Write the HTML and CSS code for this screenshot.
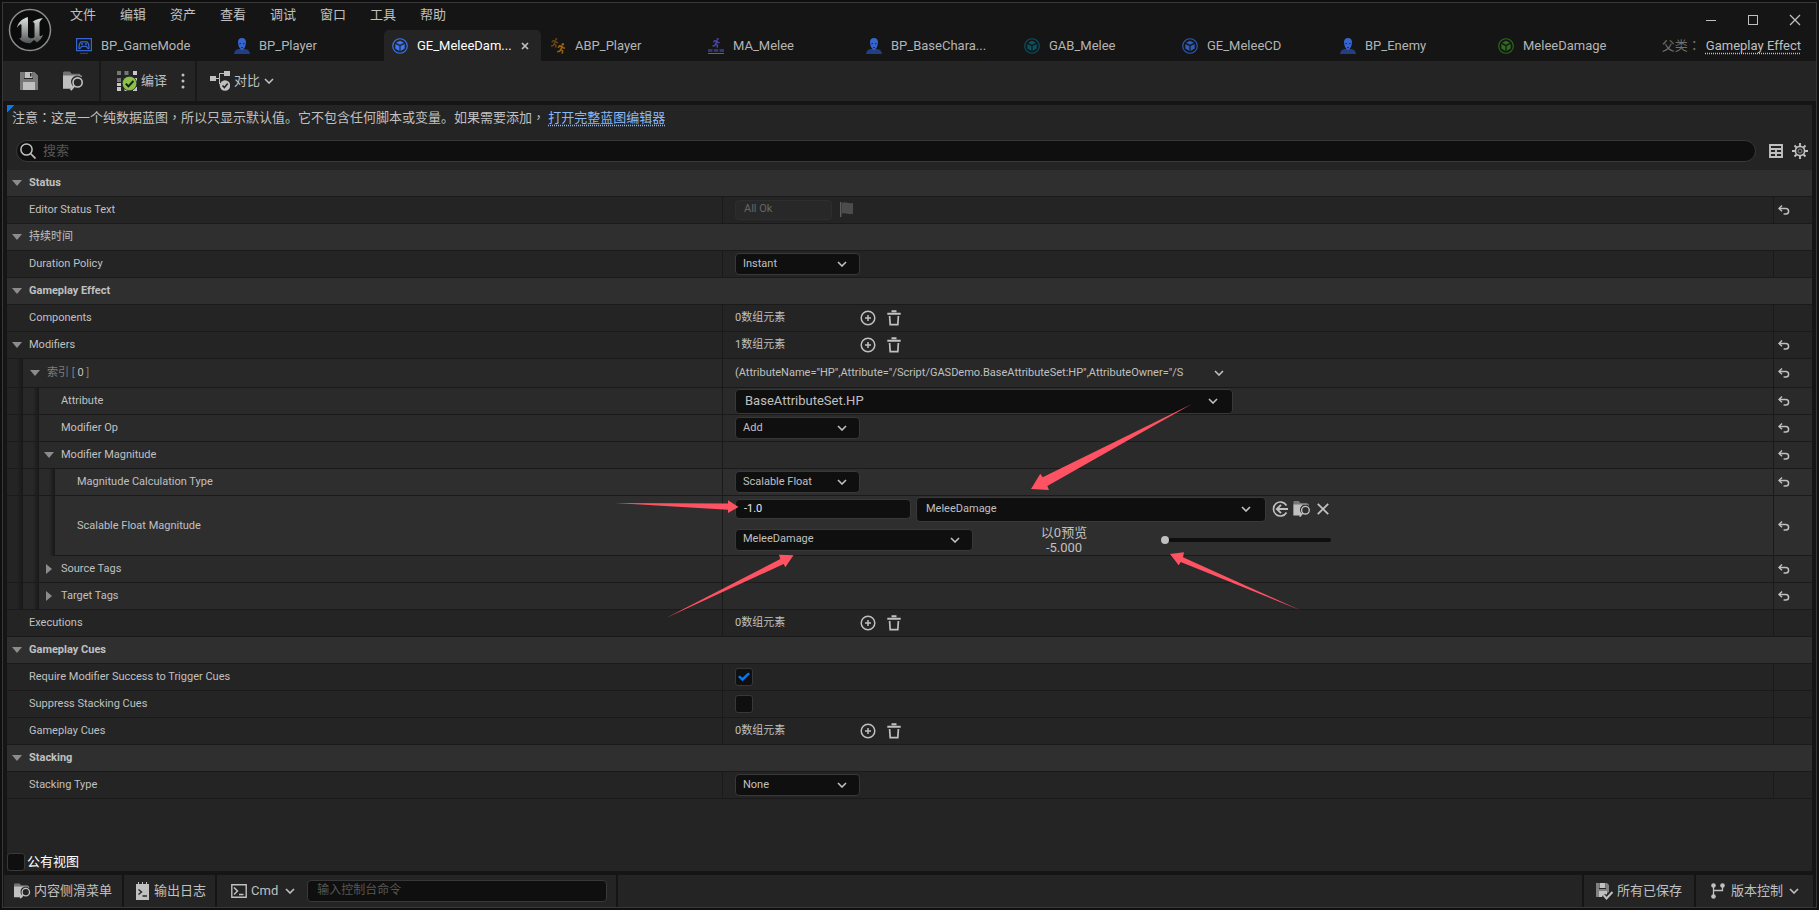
FILE: index.html
```
<!DOCTYPE html>
<html lang="zh-CN">
<head>
<meta charset="utf-8">
<title>GE_MeleeDamage</title>
<link rel="stylesheet" href="styles.css">
</head>
<body>
<svg class="sprite" aria-hidden="true">
  <symbol id="chev" viewBox="0 0 10 6"><path d="M1 1l4 4 4-4" fill="none" stroke="currentColor" stroke-width="1.6"/></symbol>
  <symbol id="plus" viewBox="0 0 16 16"><circle cx="8" cy="8" r="6.8" fill="none" stroke="currentColor" stroke-width="1.5"/><path d="M8 5v6M5 8h6" stroke="currentColor" stroke-width="1.5"/></symbol>
  <symbol id="trash" viewBox="0 0 14 16"><path d="M4.500 1.200h5M.3 3.700h13.400" stroke="currentColor" stroke-width="1.900"/><path d="M2.600 6l.6 8.600h7.600l.6-8.600" fill="none" stroke="currentColor" stroke-width="1.700"/></symbol>
  <symbol id="undo" viewBox="0 0 12 10"><path d="M1.500 3.400h6.300a2.800 2.800 0 0 1 0 5.600H5.600" fill="none" stroke="currentColor" stroke-width="1.500"/><path d="M4 .6L1 3.400l3 2.800" fill="none" stroke="currentColor" stroke-width="1.400"/></symbol>
  <symbol id="person" viewBox="0 0 16 16"><path d="M0 16c.3-3.200 2-4.600 5-5h6c3 .4 4.700 1.800 5 5z" fill="#223f86"/><path d="M8 0c2.700 0 4.200 1.800 4 4.600-.1 3-1.400 6.400-4 7.400-2.600-1-3.900-4.400-4-7.400C3.800 1.800 5.300 0 8 0z" fill="#3765d0"/><path d="M5.300 5.600h1.800M8.900 5.600h1.800M7 9.600h2" stroke="#1b2c60" stroke-width="1"/></symbol>
  <symbol id="cube" viewBox="0 0 16 16"><circle cx="8" cy="8" r="7.300" fill="none" stroke="currentColor" stroke-width="1.100"/><path d="M8 2.700l4 2-4 2.100-4-2.100zM3.300 5.900l4.100 2.200v5L3.300 10.500zM12.700 5.900L8.600 8.100v5l4.100-2.600z" fill="currentColor"/></symbol>
  <symbol id="runner" viewBox="0 0 10 12"><circle cx="7" cy="1.300" r="1.300"/><path d="M6.400 3.600L4.600 7l2.200 1.700-.5 2.800M4.700 7L3.500 9 .8 9.600M1.800 5.200l1.600-2L6.200 3.500l1.200 2h2" fill="none" stroke="currentColor" stroke-width="1.700"/></symbol>
  <symbol id="folder" viewBox="0 0 22 20"><path d="M0 3V1.200L1 0h6l2.200 2.500H18V5H0z" fill="currentColor" opacity=".5"/><path d="M0 4.300h19.500V6a6.500 6.500 0 0 0-9 9.500L9 18H0z" fill="currentColor"/><circle cx="15.300" cy="11.500" r="4.800" fill="none" stroke="currentColor" stroke-width="1.700"/><path d="M12 15l-4 4.500" stroke="currentColor" stroke-width="2"/></symbol>
  <symbol id="disk" viewBox="0 0 18 18"><path d="M0 0h4v7h9V0h1.500L18 3.500V18H0z" fill="currentColor" opacity=".55"/><path d="M4.500 0h8v6h-8zM3 10h12v8H3z" fill="currentColor"/><path d="M10 1h1.500v3.500H10z" fill="#242424"/></symbol>
</svg>

<div class="window">
  <header class="header">
    <svg class="logo" viewBox="0 0 44 44" role="img" aria-label="Unreal">
      <defs><linearGradient id="metal" x1="0" y1="0" x2="0" y2="1"><stop offset="0" stop-color="#e0e2e2"/><stop offset=".5" stop-color="#9b9f9f"/><stop offset="1" stop-color="#4d5252"/></linearGradient></defs>
      <circle cx="22" cy="22" r="20.500" fill="#0b0b0b" stroke="#8a8d8d" stroke-width="1.500"/>
      <path d="M20 9c-6 1.500-10.500 6-11 11 2.500-4 4-4.500 4.500-3v11c0 2-1 2.500-2.500 2.200C14 34 18 35.500 22.500 35.200L26 32l3 2.500c2.600-1.500 5-4.500 6.200-8-2 2-3.600 2.300-3.700.5V14.500c1-2 2.300-3.500 3.700-4.500-3.700.3-7.700 1.500-10.700 4 1.500.2 2 1 2 2v13c-1.500 1.800-5.500 2-6.500-.5V12.500c.1-1.500-.5-2.500 0-3.500z" fill="url(#metal)"/>
    </svg>
    <div class="headmain">
      <div class="menurow">
        <nav class="menu"><button>文件</button><button>编辑</button><button>资产</button><button>查看</button><button>调试</button><button>窗口</button><button>工具</button><button>帮助</button></nav>
        <div class="winctl">
          <button aria-label="最小化"><svg width="12" height="12" viewBox="0 0 12 12"><path d="M1 6.500h10" stroke="currentColor"/></svg></button>
          <button aria-label="最大化"><svg width="12" height="12" viewBox="0 0 12 12"><rect x="1.500" y="1.500" width="9" height="9" fill="none" stroke="currentColor"/></svg></button>
          <button aria-label="关闭"><svg width="12" height="12" viewBox="0 0 12 12"><path d="M1 1l10 10M11 1L1 11" stroke="currentColor" stroke-width="1.300"/></svg></button>
        </div>
      </div>
      <div class="tabrow">
        <nav class="tabs">
          <button class="tab"><svg class="i16" viewBox="0 0 16 16"><path d="M.6.600h14.800v12H.6z" fill="none" stroke="#3765d0" stroke-width="1.200"/><path d="M3 10.500c0-3.500.6-6 2-6.700h6c1.400.7 2 3.200 2 6.700-1 .6-2-1-2.600-2.200H5.600C5 9.500 4 11.100 3 10.500z" fill="none" stroke="#3765d0" stroke-width="1.300"/><circle cx="6" cy="6" r="1" fill="#3765d0"/><circle cx="10" cy="6" r="1" fill="#3765d0"/><path d="M4 15.400h8" stroke="#223f86" stroke-width="1.200"/></svg>BP_GameMode</button>
          <button class="tab"><svg class="i16"><use href="#person"/></svg>BP_Player</button>
          <button class="tab active"><svg class="i16 blue"><use href="#cube"/></svg>GE_MeleeDam...<svg class="tabx" viewBox="0 0 8 8"><path d="M1 1l6 6M7 1L1 7" stroke="#c0c0c0" stroke-width="1.700"/></svg></button>
          <button class="tab"><svg class="i16" viewBox="0 0 16 16"><use href="#runner" width="9" height="10" color="#6b440f" fill="#6b440f"/><use href="#runner" x="6" y="5" width="10" height="11" color="#9a5f10" fill="#9a5f10"/></svg>ABP_Player</button>
          <button class="tab"><svg class="i16" viewBox="0 0 16 16"><use href="#runner" x="3" width="10" height="10" color="#4a49a8" fill="#4a49a8"/><path d="M0 11h4.500v3H0zM5.700 11h4.500v3H5.700zM11.500 11H16v3h-4.500z" fill="#33327a"/><path d="M0 15.500h16" stroke="#5a59c4"/></svg>MA_Melee</button>
          <button class="tab"><svg class="i16"><use href="#person"/></svg>BP_BaseChara...</button>
          <button class="tab"><svg class="i16 teal"><use href="#cube"/></svg>GAB_Melee</button>
          <button class="tab"><svg class="i16 blue2"><use href="#cube"/></svg>GE_MeleeCD</button>
          <button class="tab"><svg class="i16"><use href="#person"/></svg>BP_Enemy</button>
          <button class="tab"><svg class="i16 green"><use href="#cube"/></svg>MeleeDamage</button>
        </nav>
        <div class="parent"><span>父类<span class="tc" lang="zh-TW">：</span></span><a href="#">Gameplay Effect</a></div>
      </div>
    </div>
  </header>

  <div class="toolbar">
    <div class="tgroup files">
      <button aria-label="保存"><svg width="18" height="18"><use href="#disk"/></svg></button>
      <button aria-label="浏览"><svg width="21" height="20"><use href="#folder"/></svg></button>
    </div>
    <div class="tgroup compile">
      <button><svg width="20" height="20" viewBox="0 0 20 20"><path d="M0 0h4v4H0zM7.500 0h4v4h-4zM0 7h4v4H0z" fill="#777"/><path d="M16 0h4v4h-4zM7.500 7h4v4h-4zM16 7h4v4h-4zM0 12h4v3H0zM0 16h4v4H0zM7.500 16h4v4h-4zM16 16h4v4h-4z" fill="#c8c8c8"/><circle cx="12.500" cy="12.500" r="7.300" fill="#8bc24a" stroke="#242424" stroke-width=".8"/><path d="M8.800 12.600l2.600 2.800 5-5.400" fill="none" stroke="#1a1a1a" stroke-width="2"/></svg>编译</button>
      <button aria-label="编译选项"><svg width="4" height="16" viewBox="0 0 4 16"><circle cx="2" cy="2" r="1.500"/><circle cx="2" cy="8" r="1.500"/><circle cx="2" cy="14" r="1.500"/></svg></button>
    </div>
    <div class="tgroup diff">
      <button><svg width="20" height="20" viewBox="0 0 20 20"><path d="M0 5h6v5H0zM14 0h6v5h-6z"/><path d="M6 7.500h3.500v-5H14M9.500 7.500V13H11" fill="none" stroke="currentColor"/><circle cx="15" cy="14.500" r="5.200"/><path d="M12.500 14.500l1.900 2 3.300-4" fill="none" stroke="#242424" stroke-width="1.600"/></svg>对比<svg class="chev"><use href="#chev"/></svg></button>
    </div>
  </div>

  <main class="panel">
    <p class="notice">注意<span class="tc" lang="zh-TW">：</span>这是一个纯数据蓝图<span class="tc" lang="zh-TW">，</span>所以只显示默认值。它不包含任何脚本或变量。如果需要添加<span class="tc" lang="zh-TW">，</span> <a href="#">打开完整蓝图编辑器</a></p>
    <div class="searchrow">
      <label class="search"><svg width="16" height="16" viewBox="0 0 16 16"><circle cx="6.500" cy="6.500" r="5.600" fill="none" stroke="currentColor" stroke-width="1.500"/><path d="M10.500 10.500l5 5" stroke="currentColor" stroke-width="1.700"/></svg><input type="text" placeholder="搜索" aria-label="搜索"></label>
      <button aria-label="表格视图"><svg width="14" height="14" viewBox="0 0 14 14"><path d="M1 1h12v12H1zM1 5h12M1 9h12M7 5v8" fill="none" stroke="currentColor" stroke-width="1.900"/></svg></button>
      <button aria-label="设置"><svg width="16" height="16" viewBox="0 0 16 16"><circle cx="8" cy="8" r="4.600" fill="none" stroke="currentColor" stroke-width="1.700"/><circle cx="8" cy="8" r="2" fill="none" stroke="#8a8a8a"/><path d="M8 0v3M8 13v3M0 8h3M13 8h3M2.500 2.500l2 2M11.500 11.500l2 2M13.500 2.500l-2 2M4.500 11.500l-2 2" stroke="currentColor" stroke-width="1.900"/></svg></button>
    </div>

    <section class="details">
      <div class="row cat"><button class="exp open" aria-label="折叠"></button>Status</div>
      <div class="row"><div class="name"><span class="exp"></span>Editor Status Text</div><div class="value"><input class="ok" aria-label="Editor Status Text" value="All Ok" disabled><svg class="flag" width="14" height="16" viewBox="0 0 14 16"><path d="M.8 0v15" stroke="#777"/><path d="M2 1c4-2 6 1.500 11-.3v11c-5 1.500-7-1.500-11 0z" fill="#4c4c4c"/></svg></div><div class="reset"><button aria-label="重置"><svg class="undo"><use href="#undo"/></svg></button></div></div>
      <div class="row cat plain"><button class="exp open" aria-label="折叠"></button>持续时间</div>
      <div class="row"><div class="name"><span class="exp"></span>Duration Policy</div><div class="value"><div class="combo w124"><select aria-label="Duration Policy"><option>Instant</option></select><svg class="chev"><use href="#chev"/></svg></div></div><div class="reset"></div></div>
      <div class="row cat"><button class="exp open" aria-label="折叠"></button>Gameplay Effect</div>
      <div class="row"><div class="name"><span class="exp"></span>Components</div><div class="value"><span class="count">0数组元素</span><button aria-label="添加"><svg class="plus"><use href="#plus"/></svg></button><button aria-label="清空"><svg class="trash"><use href="#trash"/></svg></button></div><div class="reset"></div></div>
      <div class="row"><div class="name"><button class="exp open" aria-label="折叠"></button>Modifiers</div><div class="value"><span class="count">1数组元素</span><button aria-label="添加"><svg class="plus"><use href="#plus"/></svg></button><button aria-label="清空"><svg class="trash"><use href="#trash"/></svg></button></div><div class="reset"><button aria-label="重置"><svg class="undo"><use href="#undo"/></svg></button></div></div>
      <div class="row l1 index"><div class="name"><i class="ind d0"></i><button class="exp open" aria-label="折叠"></button><span class="dim">索引 [ <b>0</b> ]</span></div><div class="value"><span class="clip">(AttributeName="HP",Attribute="/Script/GASDemo.BaseAttributeSet:HP",AttributeOwner="/S</span><button aria-label="展开"><svg class="chev"><use href="#chev"/></svg></button></div><div class="reset"><button aria-label="重置"><svg class="undo"><use href="#undo"/></svg></button></div></div>
      <div class="row l2"><div class="name"><i class="ind d0"></i><i class="ind d1"></i><span class="exp"></span>Attribute</div><div class="value"><div class="combo big w497"><select aria-label="Attribute"><option>BaseAttributeSet.HP</option></select><svg class="chev"><use href="#chev"/></svg></div></div><div class="reset"><button aria-label="重置"><svg class="undo"><use href="#undo"/></svg></button></div></div>
      <div class="row l2"><div class="name"><i class="ind d0"></i><i class="ind d1"></i><span class="exp"></span>Modifier Op</div><div class="value"><div class="combo w124"><select aria-label="Modifier Op"><option>Add</option></select><svg class="chev"><use href="#chev"/></svg></div></div><div class="reset"><button aria-label="重置"><svg class="undo"><use href="#undo"/></svg></button></div></div>
      <div class="row l2"><div class="name"><i class="ind d0"></i><i class="ind d1"></i><button class="exp open" aria-label="折叠"></button>Modifier Magnitude</div><div class="value"></div><div class="reset"><button aria-label="重置"><svg class="undo"><use href="#undo"/></svg></button></div></div>
      <div class="row l3"><div class="name"><i class="ind d0"></i><i class="ind d1"></i><i class="ind d2"></i><span class="exp"></span>Magnitude Calculation Type</div><div class="value"><div class="combo w124"><select aria-label="Magnitude Calculation Type"><option>Scalable Float</option></select><svg class="chev"><use href="#chev"/></svg></div></div><div class="reset"><button aria-label="重置"><svg class="undo"><use href="#undo"/></svg></button></div></div>
      <div class="row l3 scal"><div class="name"><i class="ind d0"></i><i class="ind d1"></i><i class="ind d2"></i><span class="exp"></span>Scalable Float Magnitude</div>
        <div class="value">
          <div class="line">
            <input class="num" aria-label="Scalable Float Magnitude" value="-1.0">
            <div class="combo table w350"><select aria-label="曲线表格"><option>MeleeDamage</option></select><svg class="chev"><use href="#chev"/></svg></div>
            <button aria-label="使用选中资产"><svg width="16" height="16" viewBox="0 0 16 16"><path d="M14.500 4.500a7 7 0 1 0 0 7" fill="none" stroke="currentColor" stroke-width="1.600"/><path d="M16 8H5M9 3.800L4.800 8 9 12.200" fill="none" stroke="currentColor" stroke-width="1.900"/></svg></button>
            <button aria-label="浏览资产"><svg width="18" height="16" viewBox="0 0 22 20"><use href="#folder"/></svg></button>
            <button aria-label="清除"><svg width="14" height="12" viewBox="0 0 14 12"><path d="M1.800.800l10.400 10.400M12.200.800L1.800 11.200" stroke="currentColor" stroke-width="1.800"/></svg></button>
          </div>
          <div class="line two">
            <div class="combo w237"><select aria-label="曲线行"><option>MeleeDamage</option></select><svg class="chev"><use href="#chev"/></svg></div>
            <div class="preview"><span>以0预览</span><span>-5.000</span></div>
            <input class="slider" type="range" min="0" max="100" value="0" aria-label="预览等级">
          </div>
        </div><div class="reset"><button aria-label="重置"><svg class="undo"><use href="#undo"/></svg></button></div></div>
      <div class="row l2"><div class="name"><i class="ind d0"></i><i class="ind d1"></i><button class="exp closed" aria-label="展开"></button>Source Tags</div><div class="value"></div><div class="reset"><button aria-label="重置"><svg class="undo"><use href="#undo"/></svg></button></div></div>
      <div class="row l2"><div class="name"><i class="ind d0"></i><i class="ind d1"></i><button class="exp closed" aria-label="展开"></button>Target Tags</div><div class="value"></div><div class="reset"><button aria-label="重置"><svg class="undo"><use href="#undo"/></svg></button></div></div>
      <div class="row"><div class="name"><span class="exp"></span>Executions</div><div class="value"><span class="count">0数组元素</span><button aria-label="添加"><svg class="plus"><use href="#plus"/></svg></button><button aria-label="清空"><svg class="trash"><use href="#trash"/></svg></button></div><div class="reset"></div></div>
      <div class="row cat"><button class="exp open" aria-label="折叠"></button>Gameplay Cues</div>
      <div class="row"><label class="name" for="req"><span class="exp"></span>Require Modifier Success to Trigger Cues</label><div class="value"><input type="checkbox" id="req" checked></div><div class="reset"></div></div>
      <div class="row"><label class="name" for="sup"><span class="exp"></span>Suppress Stacking Cues</label><div class="value"><input type="checkbox" id="sup"></div><div class="reset"></div></div>
      <div class="row"><div class="name"><span class="exp"></span>Gameplay Cues</div><div class="value"><span class="count">0数组元素</span><button aria-label="添加"><svg class="plus"><use href="#plus"/></svg></button><button aria-label="清空"><svg class="trash"><use href="#trash"/></svg></button></div><div class="reset"></div></div>
      <div class="row cat"><button class="exp open" aria-label="折叠"></button>Stacking</div>
      <div class="row"><div class="name"><span class="exp"></span>Stacking Type</div><div class="value"><div class="combo w124"><select aria-label="Stacking Type"><option>None</option></select><svg class="chev"><use href="#chev"/></svg></div></div><div class="reset"></div></div>
    </section>
    <label class="public"><input type="checkbox">公有视图</label>
  </main>

  <footer class="status">
    <button class="seg slide"><svg width="17" height="18" viewBox="0 0 22 20"><use href="#folder"/></svg>内容侧滑菜单</button>
    <button class="seg log"><svg width="13" height="18" viewBox="0 0 13 18"><path d="M0 2h2V0h1v2h3V0h1v2h3V0h1v2h2v16H0z"/><path d="M2.500 7.500L5.500 10l-3 2.500M6.500 14H11" fill="none" stroke="#242424" stroke-width="1.400"/></svg>输出日志</button>
    <div class="seg cmd">
      <button><svg width="16" height="14" viewBox="0 0 16 14"><path d="M.8.800h14.400v12.400H.8z" fill="none" stroke="currentColor" stroke-width="1.400"/><path d="M3 3.500L6.500 7 3 10.500M8 10.500h4.500" fill="none" stroke="currentColor" stroke-width="1.500"/></svg>Cmd<svg class="chev"><use href="#chev"/></svg></button>
      <input type="text" placeholder="输入控制台命令" aria-label="输入控制台命令">
    </div>
    <div class="seg fill"></div>
    <button class="seg saved"><svg width="17" height="17" viewBox="0 0 17 17"><path d="M0 0h3v6h7V0h1l2 2v7l-4 3-2 2H0z" opacity=".6"/><path d="M3.500 0h6v5h-6zM3 8h8v3l-3 3H3z"/><path d="M7.500 12l3 3.500 6-6.500" fill="none" stroke="#242424" stroke-width="4"/><path d="M7.500 12l3 3.500 6-6.500" fill="none" stroke="currentColor" stroke-width="2"/></svg>所有已保存</button>
    <button class="seg vcs"><svg width="14" height="16" viewBox="0 0 14 16"><circle cx="2.500" cy="2.500" r="2.300"/><circle cx="11.500" cy="2.500" r="2.300"/><circle cx="2.500" cy="13.500" r="2.300"/><path d="M2.500 2v11M11.500 2v5.500h-9" fill="none" stroke="currentColor" stroke-width="1.300"/></svg>版本控制<svg class="chev"><use href="#chev"/></svg></button>
  </footer>
</div>

<svg class="marks" width="1819" height="910" viewBox="0 0 1819 910" aria-hidden="true">
  <path d="M615 503l113 .5v-3.200l10.500 6.700-10.500 6v-3.300z"/>
  <path d="M666 618l114.300-59-1.300-4.300 14.500.6-8.200 12-1.600-3.300z"/>
  <path d="M1192 404l-144.700 82 1.700 4-18-1 9.300-15.300 2.400 3.600z"/>
  <path d="M1301 610.500L1180.700 562l-2 3.300L1170 554l14-1.700-1 5z"/>
</svg>
</body>
</html>
```
FILE: styles.css
```
* { box-sizing: border-box; }
body {
  margin: 0;
  height: 100vh;
  padding: 2px;
  display: flex;
  background: #0f0f0f;
  color: #c0c0c0;
  font: 13px/16px Roboto, "Noto Sans CJK SC", sans-serif;
  overflow: hidden;
}
button, input, select { font: inherit; color: inherit; }
button { background: none; border: 0; padding: 0; display: inline-flex; align-items: center; }
svg { fill: currentColor; flex: none; display: block; }
.sprite { position: absolute; width: 0; height: 0; }
.tc { font-family: "Noto Sans CJK TC", sans-serif; }

.window {
  flex: 1;
  min-width: 0;
  display: flex;
  flex-direction: column;
  background: #151515;
  border: 1px solid #383838;
}

/* title area */
.header { display: flex; height: 58px; }
.logo { width: 44px; height: 44px; margin: 5px 16px 0 5px; }
.headmain { flex: 1; min-width: 0; display: flex; flex-direction: column; }
.menurow { display: flex; justify-content: space-between; height: 27px; }
.menu { display: flex; gap: 24px; height: 24px; padding-left: 2px; }
.winctl { display: flex; gap: 30px; padding: 7px 15px 0 0; }
.tabrow { display: flex; flex: 1; justify-content: space-between; align-items: stretch; }
.tabs { display: flex; gap: 1px; }
.tab { width: 157px; padding-left: 8px; gap: 9px; border-radius: 5px 5px 0 0; color: #b4b4b4; white-space: nowrap; }
.tab.active { background: #242424; color: #fff; }
.i16 { width: 16px; height: 16px; }
.tabx { width: 8px; height: 8px; }
.blue { color: #3d76f5; }
.blue2 { color: #2f5cb8; }
.teal { color: #0d5264; }
.green { color: #2f6b1e; }
.parent { display: flex; align-items: center; gap: 5px; padding-right: 15px; color: #707070; white-space: nowrap; }
.parent a { color: #c0c0c0; text-decoration: underline dotted; text-underline-offset: 3px; }

/* toolbar */
.toolbar { display: flex; height: 40px; margin-bottom: 4px; background: #242424; }
.tgroup { display: flex; align-items: center; border-right: 2px solid #191919; }
.tgroup button { gap: 4px; }
.files { width: 98px; padding-left: 17px; gap: 25px; }
.compile { width: 96px; padding-left: 16px; gap: 14px; }
.diff { padding-left: 13px; border: 0; }
.chev { width: 10px; height: 6px; }

/* details panel */
.panel {
  flex: 1;
  display: flex;
  flex-direction: column;
  margin: 0 4px 4px;
  background: linear-gradient(135deg, #0f78e6 5px, transparent 5px) no-repeat #242424;
}
.notice { margin: 0 0 10px; padding-left: 5px; line-height: 24px; }
.notice a { color: #8ab8f5; text-decoration: underline dotted; text-underline-offset: 3px; }
.searchrow { display: flex; align-items: center; padding: 0 4px 0 9px; margin-bottom: 8px; gap: 9px; }
.search {
  flex: 1;
  display: flex;
  align-items: center;
  gap: 7px;
  height: 22px;
  margin-right: 4px;
  padding-left: 3px;
  background: #0f0f0f;
  border: 1px solid #383838;
  border-radius: 11px;
}
.search input { flex: 1; background: none; border: 0; outline: 0; padding: 0 0 2px; height: 18px; }
::placeholder { color: #575757; opacity: 1; }

.details { font-size: 11px; }
.row { display: flex; height: 27px; border-bottom: 1px solid #1a1a1a; background: #242424; }
.cat { align-items: center; background: #2f2f2f; font-weight: 700; }
.plain { font-weight: 400; }
.l1 { background: #282828; }
.l2 { background: #2a2a2a; }
.l3 { background: #2e2e2e; }
.index { height: 29px; }
.scal { height: 60px; }
.name { flex: 0 0 715px; display: flex; align-items: center; padding-bottom: 1px; padding-right: 8px; }
.scal .name { padding-bottom: 0; }
.value { flex: 1; min-width: 0; display: flex; align-items: center; padding-left: 12px; border-left: 1px solid #1a1a1a; }
.reset { flex: 0 0 39px; display: flex; align-items: center; padding-left: 4px; border-left: 1px solid #1a1a1a; }
.exp { flex: 0 0 22px; height: 16px; padding-left: 5px; display: flex; align-items: center; }
.open::before { content: ""; border: 5px solid transparent; border-top: 6px solid #8c8c8c; border-bottom: 0; }
.closed::before { content: ""; margin-left: 2px; border: 5px solid transparent; border-left: 6px solid #8c8c8c; border-right: 0; }
.index .exp { flex-basis: 24px; padding-left: 7px; }
.ind { align-self: stretch; flex: 0 0 16px; margin-bottom: -1px; }
.d0 { background: linear-gradient(90deg, #242424 10px, #181818); }
.d1 { background: linear-gradient(90deg, #282828 10px, #181818); }
.d2 { background: linear-gradient(90deg, #2a2a2a 10px, #181818); }
.dim { color: #7d7d7d; }
.dim b { font-weight: 400; color: #c0c0c0; }
.undo { width: 12px; height: 10px; }
.plus { width: 16px; height: 16px; }
.trash { width: 14px; height: 16px; margin-left: 11px; }
.count { width: 125px; }
.clip { width: 459px; margin-right: 20px; white-space: nowrap; }
.flag { margin-left: 8px; }

.combo { display: grid; align-items: center; grid-template-columns: 1fr; height: 22px; }
.combo select, .combo .chev { grid-area: 1 / 1; }
.combo select {
  appearance: none;
  width: 100%;
  height: 100%;
  padding: 0 30px 1px 7px;
  background: #0f0f0f;
  border: 1px solid #383838;
  border-radius: 4px;
}
.combo .chev { justify-self: end; margin-right: 13px; pointer-events: none; }
.combo.big, .combo.table { height: 25px; }
.combo.big { font-size: 13px; }
.combo.big select, .combo.table select { padding-left: 9px; }
.combo.big .chev, .combo.table .chev { margin-right: 15px; }
.w124 { width: 125px; }
.w237 { width: 238px; }
.w350 { width: 350px; }
.w497 { width: 498px; }
.ok { width: 97px; height: 20px; padding: 0 8px 3px; background: #282828; border: 1px solid #2e2e2e; border-radius: 4px; color: #666; }
.scal .value { flex-direction: column; align-items: stretch; }
.line { display: flex; align-items: center; height: 26px; gap: 5px; }
.two { height: 33px; padding-top: 2px; gap: 0; }
.num { width: 176px; height: 20px; padding: 0 8px 1px; background: #0f0f0f; border: 1px solid #383838; border-radius: 4px; color: #e8e8e8; }
.line .w350 { margin-right: 1px; }
.preview { width: 182px; display: flex; flex-direction: column; align-items: center; font-size: 13px; line-height: 15px; }
.slider { appearance: none; width: 170px; height: 8px; margin: 0 0 0 6px; background: none; }
.slider::-webkit-slider-runnable-track { height: 4px; background: #0f0f0f; border-radius: 2px; }
.slider::-webkit-slider-thumb { appearance: none; width: 8px; height: 8px; margin-top: -2px; border-radius: 4px; background: #c0c0c0; }
input[type="checkbox"] {
  appearance: none;
  width: 18px;
  height: 18px;
  margin: 0;
  background: #0f0f0f no-repeat center;
  border: 1px solid #383838;
  border-radius: 3px;
  display: grid;
  place-items: center;
}
input[type="checkbox"]:checked::before {
  content: "";
  width: 12px;
  height: 10px;
  background: #0a78ec;
  clip-path: polygon(0 50%, 15% 35%, 37% 58%, 85% 5%, 100% 20%, 37% 92%);
}
.public { display: flex; align-items: center; gap: 2px; margin-top: auto; color: #fff; }

/* status bar */
.status { display: flex; height: 32px; gap: 2px; margin: 0 3px 0 1px; white-space: nowrap; }
.seg { display: flex; align-items: center; gap: 4px; background: #242424; }
.slide { padding: 0 10px; gap: 3px; }
.log { padding: 0 9px 0 12px; gap: 5px; }
.cmd { padding: 0 9px 0 14px; gap: 12px; }
.cmd button { gap: 4px; }
.cmd .chev { margin-left: 3px; }
.cmd input { width: 300px; height: 22px; padding: 0 9px 2px; background: #0f0f0f; border: 1px solid #383838; border-radius: 4px; font-size: 12px; }
.fill { flex: 1; }
.saved { padding: 0 12px; }
.vcs { padding: 0 14px 0 15px; gap: 6px; }

/* annotation arrows laid over the window */
.marks { position: absolute; top: 0; left: 0; fill: #ff5263; pointer-events: none; }
```
